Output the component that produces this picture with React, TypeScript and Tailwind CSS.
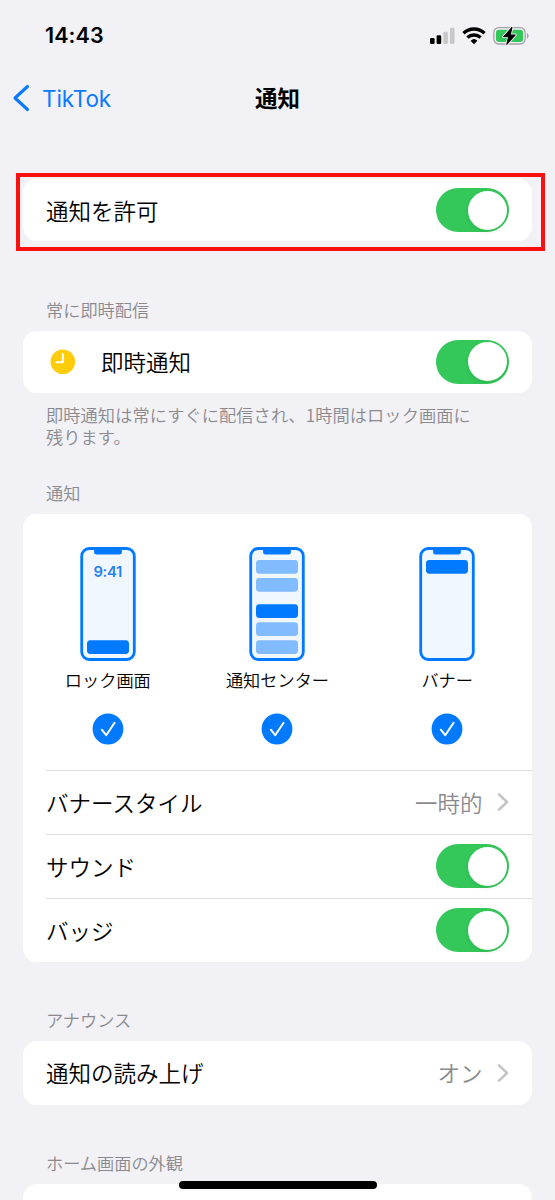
import { useState } from "react";
import type { ReactNode } from "react";

type AlertKind = "lock" | "center" | "banner";

const ALERTS: { kind: AlertKind; label: string }[] = [
  { kind: "lock", label: "ロック画面" },
  { kind: "center", label: "通知センター" },
  { kind: "banner", label: "バナー" },
];

// bars drawn inside each phone preview
const PREVIEW_BARS: Record<AlertKind, { y: number; solid: boolean }[]> = {
  lock: [{ y: 93.3, solid: true }],
  center: [
    { y: 13, solid: false },
    { y: 31, solid: false },
    { y: 57.3, solid: true },
    { y: 75.3, solid: false },
    { y: 93.3, solid: false },
  ],
  banner: [{ y: 13, solid: true }],
};

function StatusBar() {
  return (
    <div className="flex h-[71px] items-center justify-between pl-[45px] pr-[25px]">
      <span className="font-['Inter'] text-[21.5px] font-semibold tracking-[0.1px]">14:43</span>
      <div className="flex items-center">
        <svg width="25" height="18" viewBox="0 0 25 18">
          <rect x="0" y="11" width="4.6" height="6" rx="1.3" fill="#000" />
          <rect x="6.6" y="8.3" width="4.6" height="8.7" rx="1.3" fill="#000" />
          <rect x="13.3" y="4.7" width="4.6" height="12.3" rx="1.3" fill="#c8c8cc" />
          <rect x="19.9" y="0.8" width="4.6" height="16.2" rx="1.3" fill="#c8c8cc" />
        </svg>
        <svg className="ml-[7px]" width="24" height="18" viewBox="0 0 24 18">
          <g fill="none" stroke="#000" strokeWidth="3.4">
            <path d="M1.5 6.2a15.2 15.2 0 0 1 21 0" />
            <path d="M5.4 10.6a9.6 9.6 0 0 1 13.2 0" />
          </g>
          <path d="M12 17.2 8.6 13.7a5 5 0 0 1 6.8 0z" fill="#000" />
        </svg>
        <svg className="ml-[7px]" width="37" height="20" viewBox="0 0 37 20">
          <rect x="0.8" y="1.6" width="31.4" height="16.4" rx="5" fill="none" stroke="#a3a3a7" strokeWidth="1.3" />
          <path d="M34 7v5.6c2.2-.9 2.2-4.7 0-5.6z" fill="#a3a3a7" />
          <rect x="2.9" y="3.7" width="27.2" height="12.2" rx="3.2" fill="#33c759" />
          <path
            d="M19 1.2 10.6 10.7h4.9L13.7 18.6 22.4 8.9h-5z"
            fill="#000"
            stroke="#f1f1f6"
            strokeWidth="2.6"
            strokeLinejoin="round"
            paintOrder="stroke"
          />
          <path d="M19 1.2 10.6 10.7h4.9L13.7 18.6 22.4 8.9h-5z" fill="#000" stroke="#000" strokeWidth="0.8" strokeLinejoin="round" />
        </svg>
      </div>
    </div>
  );
}

function NavBar() {
  return (
    <header className="grid h-[54px] grid-cols-[1fr_auto_1fr] items-center">
      <button className="flex items-center pl-[12px] text-[#0a7aff]">
        <svg width="18" height="28" viewBox="0 0 18 28">
          <path d="M15.5 2.5 3 14l12.5 11.5" fill="none" stroke="currentColor" strokeWidth="3.1" strokeLinecap="round" strokeLinejoin="round" />
        </svg>
        <span className="ml-[12px] pt-px font-['Inter'] text-[22.5px] font-normal tracking-[-0.1px]">TikTok</span>
      </button>
      <h1 className="text-[22.5px] font-bold">通知</h1>
      <span />
    </header>
  );
}

function Toggle({ initial = true }: { initial?: boolean }) {
  const [on, setOn] = useState(initial);
  return (
    <button
      role="switch"
      aria-checked={on}
      onClick={() => setOn(!on)}
      className={`flex h-[44px] w-[73px] shrink-0 items-center rounded-full p-[2.5px] ${on ? "justify-end bg-[#34c759]" : "justify-start bg-[#e9e9eb]"}`}
    >
      <span className="size-[39px] rounded-full bg-white shadow-[0_2px_5px_rgba(0,0,0,0.08)]" />
    </button>
  );
}

function Chevron() {
  return (
    <svg className="ml-[15px]" width="12" height="20" viewBox="0 0 12 20">
      <path d="M2 2.4 10 10l-8 7.6" fill="none" stroke="#c4c4c6" strokeWidth="2.6" strokeLinecap="round" strokeLinejoin="round" />
    </svg>
  );
}

function SectionTitle({ children }: { children: ReactNode }) {
  return <h2 className="mb-[9px] pl-[23px] text-[17.2px] leading-[24px] text-[#8a8a8e]">{children}</h2>;
}

function Card({ children }: { children: ReactNode }) {
  return <div className="rounded-[14px] bg-white">{children}</div>;
}

function Row({ label, height, children }: { label: string; height: string; children: ReactNode }) {
  return (
    <div className={`flex items-center justify-between pr-[22.6px] ${height}`}>
      <span className="text-[22.5px]">{label}</span>
      <div className="flex items-center">{children}</div>
    </div>
  );
}

function PhonePreview({ kind }: { kind: AlertKind }) {
  return (
    <svg width="56" height="114" viewBox="0 0 56 114">
      <rect x="1.7" y="1.5" width="52.6" height="111" rx="7.5" fill="#f0f7ff" stroke="#027aff" strokeWidth="2.8" />
      <path d="M13 1.5h30c-1 0-1 1-1.1 2.2v1.5a2.2 2.2 0 0 1-2.2 2.2H16.3a2.2 2.2 0 0 1-2.2-2.2V3.7C14 2.5 14 1.5 13 1.5z" fill="#027aff" />
      {PREVIEW_BARS[kind].map((bar) => (
        <rect key={bar.y} x="7" y={bar.y} width="42" height="13.7" rx="3.4" fill={bar.solid ? "#027aff" : "#80bcff"} />
      ))}
      {kind === "lock" && (
        <text x="27.7" y="30.3" textAnchor="middle" className="fill-[#1f82f5] font-['Inter'] text-[14.8px] font-semibold tracking-[-0.3px]">
          9:41
        </text>
      )}
    </svg>
  );
}

function AlertOption({ kind, label }: { kind: AlertKind; label: string }) {
  return (
    <div className="flex flex-col items-center">
      <PhonePreview kind={kind} />
      <span className="mt-[7px] text-[17.2px] leading-[24px]">{label}</span>
      <svg className="mt-[21.5px]" width="32" height="32" viewBox="0 0 32 32">
        <circle cx="16" cy="16" r="15.4" fill="#027aff" />
        <path d="M9.8 16.7 14.2 22.2 22.6 9.8" fill="none" stroke="#fff" strokeWidth="2" strokeLinecap="round" strokeLinejoin="round" />
      </svg>
    </div>
  );
}

export default function App() {
  return (
    <div className="relative h-[1200px] w-[555px] overflow-hidden bg-[#f1f1f6] font-['Noto_Sans_CJK_JP',sans-serif] font-[350] text-black">
      <StatusBar />
      <NavBar />

      <main className="px-[23px] pt-[54.4px]">
        <section className="relative">
          <Card>
            <div className="pl-[23px]">
              <Row label="通知を許可" height="h-[62px]">
                <Toggle />
              </Row>
            </div>
          </Card>
          {/* highlight frame */}
          <div className="pointer-events-none absolute -left-[7px] -right-[13px] -top-[6.4px] h-[78px] border-4 border-[#fb1010]" />
        </section>

        <section className="mt-[56.3px]">
          <SectionTitle>常に即時配信</SectionTitle>
          <Card>
            <div className="flex items-center pl-[27px]">
              <svg className="mr-[25px] shrink-0" width="26" height="26" viewBox="0 0 26 26">
                <circle cx="12.8" cy="12.7" r="12.3" fill="#ffcc0a" />
                <path d="M12.8 5v8.3H6.2" fill="none" stroke="#fff" strokeWidth="1.9" strokeLinecap="round" strokeLinejoin="round" />
              </svg>
              <div className="grow">
                <Row label="即時通知" height="h-[62px]">
                  <Toggle />
                </Row>
              </div>
            </div>
          </Card>
          <p className="mt-[11.2px] whitespace-nowrap pl-[23px] text-[17.2px] leading-[22.5px] tracking-[0.1px] text-[#8a8a8e]">
            即時通知は常にすぐに配信され、1時間はロック画面に
            <br />
            残ります。
          </p>
        </section>

        <section className="mt-[32.1px]">
          <SectionTitle>通知</SectionTitle>
          <Card>
            <div className="grid h-[256px] grid-cols-3 pt-[33px]">
              {ALERTS.map((alert) => (
                <AlertOption key={alert.kind} kind={alert.kind} label={alert.label} />
              ))}
            </div>
            <div className="ml-[23px] divide-y divide-[#dedee0] border-t border-[#dedee0]">
              <Row label="バナースタイル" height="h-[64px]">
                <span className="text-[22.5px] text-[#8a8a8e]">一時的</span>
                <Chevron />
              </Row>
              <Row label="サウンド" height="h-[64px]">
                <Toggle />
              </Row>
              <Row label="バッジ" height="h-[63px]">
                <Toggle />
              </Row>
            </div>
          </Card>
        </section>

        <section className="mt-[46px]">
          <SectionTitle>アナウンス</SectionTitle>
          <Card>
            <div className="pl-[23px]">
              <Row label="通知の読み上げ" height="h-[64px]">
                <span className="text-[22.5px] text-[#8a8a8e]">オン</span>
                <Chevron />
              </Row>
            </div>
          </Card>
        </section>

        <section className="mt-[46px]">
          <SectionTitle>ホーム画面の外観</SectionTitle>
          <Card>
            <div className="h-[64px]" />
          </Card>
        </section>
      </main>

      {/* home indicator */}
      <div className="absolute left-[178.5px] top-[1181px] h-[8px] w-[198.5px] rounded-full bg-black" />
    </div>
  );
}
